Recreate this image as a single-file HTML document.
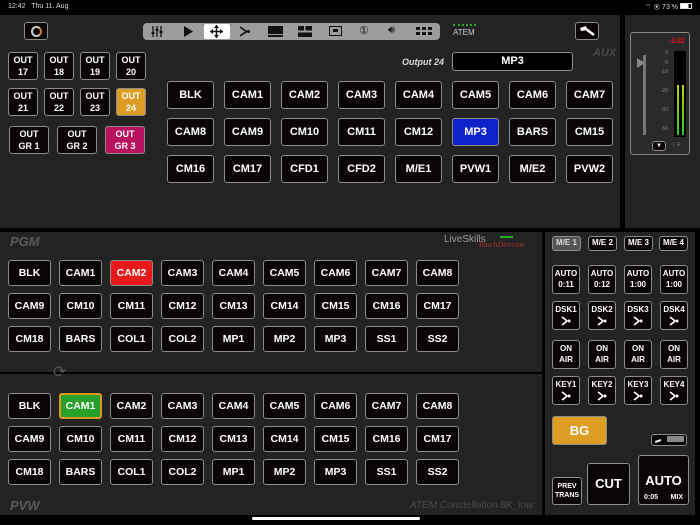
<!DOCTYPE html>
<html><head><meta charset="utf-8"><style>
*{margin:0;padding:0;box-sizing:border-box}
body{width:700px;height:525px;background:#000;position:relative;overflow:hidden;font-family:"Liberation Sans",sans-serif;color:#fff}
.p{position:absolute;background:#232323}
.b{position:absolute;background:#0b0606;border:1.5px solid #8c8c8c;border-radius:3px;color:#fff;font-weight:bold;font-size:11px;display:flex;flex-direction:column;align-items:center;justify-content:center;text-align:center;line-height:1.35}
.s{font-size:9px}
.g{position:absolute;color:#5a5a5a;font-style:italic;font-weight:bold;font-size:13px}
.r1 .b{height:28px;width:47px}
.pg .b{height:26px;width:43px;font-size:10.5px}
.k{font-size:8px}
.k svg{margin-top:1px}
</style></head><body>
<div style="position:absolute;left:8px;top:3px;font-size:7px;color:#ddd">12:42&nbsp;&nbsp; Thu 11. Aug</div>
<div style="position:absolute;left:645px;top:3px;font-size:7px;color:#ddd">⌔ ◉ 73 % <span style="display:inline-block;width:12px;height:6px;border:1px solid #ddd;background:linear-gradient(90deg,#fff 73%,transparent 73%)"></span></div>

<div class="p" style="left:0;top:15px;width:620px;height:213px"></div>
<div class="p" style="left:625px;top:15px;width:75px;height:213px"></div>
<div class="p" style="left:0;top:232px;width:542px;height:140px"></div>
<div class="p" style="left:0;top:374px;width:542px;height:141px"></div>
<div class="p" style="left:545px;top:232px;width:150px;height:283px"></div>

<div class="b" style="left:24px;top:22px;width:24px;height:18px;border-radius:3px"><div style="width:11px;height:11px;border-radius:50%;border:2px solid #ccc;border-right-color:#e07a20"></div></div>
<div style="position:absolute;left:143px;top:23px;width:297px;height:17px;background:#9c9c9c;border-radius:4px;color:#111;font-size:11px">
<div style="position:absolute;left:61px;top:1px;width:26px;height:15px;background:#fff;border-radius:2px"></div>
<svg style="position:absolute;left:8px;top:3px" width="12" height="11"><path d="M2 0V11M6 0V11M10 0V11" stroke="#111" stroke-width="1.3"/><rect x="0.5" y="6" width="3" height="2" fill="#111"/><rect x="4.5" y="3" width="3" height="2" fill="#111"/><rect x="8.5" y="5" width="3" height="2" fill="#111"/></svg>
<svg style="position:absolute;left:40px;top:3px" width="11" height="11"><path d="M1 0L10 5.5L1 11Z" fill="#111"/></svg>
<svg style="position:absolute;left:67px;top:2px" width="13" height="13"><path d="M6.5 0V13M0 6.5H13" stroke="#111" stroke-width="1.5"/><path d="M6.5 0L4 3H9ZM6.5 13L4 10H9ZM0 6.5L3 4V9ZM13 6.5L10 4V9Z" fill="#111"/></svg>
<svg style="position:absolute;left:96px;top:3px" width="12" height="11"><path d="M1 1Q5 4 8 5.5M1 10Q5 7 8 5.5" stroke="#111" stroke-width="1.6" fill="none"/><circle cx="9.5" cy="5.5" r="1.5" fill="#111"/></svg>
<span style="position:absolute;left:125px;top:3px;width:15px;height:8px;background:#111;display:block"></span>
<span style="position:absolute;left:125px;top:12px;width:15px;height:1.5px;background:#111;display:block"></span>
<svg style="position:absolute;left:155px;top:3px" width="14" height="11"><rect x="0" y="0" width="6" height="4.5" fill="#111"/><rect x="7.5" y="0" width="6.5" height="4.5" fill="#111"/><rect x="0" y="6.5" width="14" height="4.5" fill="#111"/></svg>
<span style="position:absolute;left:186px;top:3px;width:13px;height:10px;border:1.5px solid #111;display:block"><span style="display:block;margin:2px auto;width:5px;height:3px;background:#111"></span></span>
<span style="position:absolute;left:216px;top:1px">①</span>
<span style="position:absolute;left:245px;top:1px">🔊︎</span>
<svg style="position:absolute;left:273px;top:4px" width="16" height="8"><g fill="#111"><rect x="0" y="0" width="4" height="3"/><rect x="6" y="0" width="4" height="3"/><rect x="12" y="0" width="4" height="3"/><rect x="0" y="5" width="4" height="3"/><rect x="6" y="5" width="4" height="3"/><rect x="12" y="5" width="4" height="3"/></g></svg>
</div>
<div style="position:absolute;left:453px;top:24px;width:23px;border-top:2px dotted #2a2;"></div>
<div style="position:absolute;left:453px;top:28px;font-size:8px;color:#ccc">ATEM</div>
<div class="b" style="left:575px;top:22px;width:24px;height:18px"><svg width="16" height="12"><path d="M1 3L7 1L8 5L2 6Z" fill="#fff"/><path d="M7 4L15 10" stroke="#fff" stroke-width="2.5"/></svg></div>

<div class="b s" style="left:8px;top:52px;width:30px;height:28px">OUT<br>17</div>
<div class="b s" style="left:44px;top:52px;width:30px;height:28px">OUT<br>18</div>
<div class="b s" style="left:80px;top:52px;width:30px;height:28px">OUT<br>19</div>
<div class="b s" style="left:116px;top:52px;width:30px;height:28px">OUT<br>20</div>
<div class="b s" style="left:8px;top:88px;width:30px;height:28px">OUT<br>21</div>
<div class="b s" style="left:44px;top:88px;width:30px;height:28px">OUT<br>22</div>
<div class="b s" style="left:80px;top:88px;width:30px;height:28px">OUT<br>23</div>
<div class="b s" style="left:116px;top:88px;width:30px;height:28px;background:#dc9d22">OUT<br>24</div>
<div class="b s" style="left:9px;top:126px;width:40px;height:28px">OUT<br>GR 1</div>
<div class="b s" style="left:57px;top:126px;width:40px;height:28px">OUT<br>GR 2</div>
<div class="b s" style="left:105px;top:126px;width:40px;height:28px;background:#b8125e">OUT<br>GR 3</div>

<div style="position:absolute;left:402px;top:57px;font-size:9px;font-style:italic;font-weight:bold;color:#ddd">Output 24</div>
<div class="b" style="left:452px;top:52px;width:121px;height:19px;background:#000">MP3</div>
<div class="g" style="left:593px;top:47px;font-size:11px;color:#4a4a4a">AUX</div>

<div class="r1">
<div class="b" style="left:167px;top:81px">BLK</div><div class="b" style="left:224px;top:81px">CAM1</div><div class="b" style="left:281px;top:81px">CAM2</div><div class="b" style="left:338px;top:81px">CAM3</div><div class="b" style="left:395px;top:81px">CAM4</div><div class="b" style="left:452px;top:81px">CAM5</div><div class="b" style="left:509px;top:81px">CAM6</div><div class="b" style="left:566px;top:81px">CAM7</div>
<div class="b" style="left:167px;top:118px">CAM8</div><div class="b" style="left:224px;top:118px">CAM9</div><div class="b" style="left:281px;top:118px">CM10</div><div class="b" style="left:338px;top:118px">CM11</div><div class="b" style="left:395px;top:118px">CM12</div><div class="b" style="left:452px;top:118px;background:#0f22c8">MP3</div><div class="b" style="left:509px;top:118px">BARS</div><div class="b" style="left:566px;top:118px">CM15</div>
<div class="b" style="left:167px;top:155px">CM16</div><div class="b" style="left:224px;top:155px">CM17</div><div class="b" style="left:281px;top:155px">CFD1</div><div class="b" style="left:338px;top:155px">CFD2</div><div class="b" style="left:395px;top:155px">M/E1</div><div class="b" style="left:452px;top:155px">PVW1</div><div class="b" style="left:509px;top:155px">M/E2</div><div class="b" style="left:566px;top:155px">PVW2</div>
</div>

<div style="position:absolute;left:630px;top:32px;width:60px;height:123px;border:1.5px solid #888;border-radius:3px;background:#2a2a2a"></div>
<div style="position:absolute;left:669px;top:38px;font-size:7px;color:#e01010;font-weight:bold">-3.82</div>
<div style="position:absolute;left:674px;top:51px;width:12px;height:86px;background:#000"></div>
<div style="position:absolute;left:677px;top:85px;width:2px;height:50px;background:linear-gradient(#cc0,#2c2)"></div>
<div style="position:absolute;left:682px;top:85px;width:2px;height:50px;background:linear-gradient(#cc0,#2c2)"></div>
<div style="position:absolute;left:643px;top:55px;width:3px;height:80px;background:#777"></div>
<div style="position:absolute;left:637px;top:58px;width:0;height:0;border-top:5px solid transparent;border-bottom:5px solid transparent;border-left:8px solid #888"></div>
<div style="position:absolute;left:656px;top:49px;font-size:5px;color:#888;line-height:9.5px;text-align:right;width:12px">0<br>-5<br>-10<br><br>-20<br><br>-30<br><br>-50</div>
<div class="b" style="left:652px;top:141px;width:14px;height:10px;font-size:6px">▼</div>
<div style="position:absolute;left:673px;top:142px;font-size:5px;color:#777">L R</div>

<div class="g" style="left:10px;top:234px">PGM</div>
<div style="position:absolute;left:444px;top:234px;font-size:10px;color:#999">LiveSkills</div>
<div style="position:absolute;left:478px;top:240px;font-size:8px;color:#b03030;font-style:italic;font-family:'Liberation Serif',serif">TouchDirector</div>
<div style="position:absolute;left:500px;top:236px;width:13px;height:2px;background:#2a2"></div>
<div style="position:absolute;left:53px;top:362px;font-size:16px;color:#555">⟳</div>
<div class="g" style="left:10px;top:498px">PVW</div>
<div style="position:absolute;left:410px;top:500px;font-size:10px;color:#4a4a4a;font-style:italic">ATEM Constellation 8K_low</div>

<div class="pg">
<div class="b" style="left:8px;top:260px">BLK</div><div class="b" style="left:59px;top:260px">CAM1</div><div class="b" style="left:110px;top:260px;background:#e8191a">CAM2</div><div class="b" style="left:161px;top:260px">CAM3</div><div class="b" style="left:212px;top:260px">CAM4</div><div class="b" style="left:263px;top:260px">CAM5</div><div class="b" style="left:314px;top:260px">CAM6</div><div class="b" style="left:365px;top:260px">CAM7</div><div class="b" style="left:416px;top:260px">CAM8</div>
<div class="b" style="left:8px;top:293px">CAM9</div><div class="b" style="left:59px;top:293px">CM10</div><div class="b" style="left:110px;top:293px">CM11</div><div class="b" style="left:161px;top:293px">CM12</div><div class="b" style="left:212px;top:293px">CM13</div><div class="b" style="left:263px;top:293px">CM14</div><div class="b" style="left:314px;top:293px">CM15</div><div class="b" style="left:365px;top:293px">CM16</div><div class="b" style="left:416px;top:293px">CM17</div>
<div class="b" style="left:8px;top:326px">CM18</div><div class="b" style="left:59px;top:326px">BARS</div><div class="b" style="left:110px;top:326px">COL1</div><div class="b" style="left:161px;top:326px">COL2</div><div class="b" style="left:212px;top:326px">MP1</div><div class="b" style="left:263px;top:326px">MP2</div><div class="b" style="left:314px;top:326px">MP3</div><div class="b" style="left:365px;top:326px">SS1</div><div class="b" style="left:416px;top:326px">SS2</div>

<div class="b" style="left:8px;top:393px">BLK</div><div class="b" style="left:59px;top:393px;background:#27a02c;border:2.5px solid #d99a20">CAM1</div><div class="b" style="left:110px;top:393px">CAM2</div><div class="b" style="left:161px;top:393px">CAM3</div><div class="b" style="left:212px;top:393px">CAM4</div><div class="b" style="left:263px;top:393px">CAM5</div><div class="b" style="left:314px;top:393px">CAM6</div><div class="b" style="left:365px;top:393px">CAM7</div><div class="b" style="left:416px;top:393px">CAM8</div>
<div class="b" style="left:8px;top:426px">CAM9</div><div class="b" style="left:59px;top:426px">CM10</div><div class="b" style="left:110px;top:426px">CM11</div><div class="b" style="left:161px;top:426px">CM12</div><div class="b" style="left:212px;top:426px">CM13</div><div class="b" style="left:263px;top:426px">CM14</div><div class="b" style="left:314px;top:426px">CM15</div><div class="b" style="left:365px;top:426px">CM16</div><div class="b" style="left:416px;top:426px">CM17</div>
<div class="b" style="left:8px;top:459px">CM18</div><div class="b" style="left:59px;top:459px">BARS</div><div class="b" style="left:110px;top:459px">COL1</div><div class="b" style="left:161px;top:459px">COL2</div><div class="b" style="left:212px;top:459px">MP1</div><div class="b" style="left:263px;top:459px">MP2</div><div class="b" style="left:314px;top:459px">MP3</div><div class="b" style="left:365px;top:459px">SS1</div><div class="b" style="left:416px;top:459px">SS2</div>
</div>

<div class="b" style="left:552px;top:236px;width:29px;height:15px;font-size:8px;background:#555;color:#ddd">M/E 1</div>
<div class="b" style="left:588px;top:236px;width:29px;height:15px;font-size:8px">M/E 2</div>
<div class="b" style="left:624px;top:236px;width:29px;height:15px;font-size:8px">M/E 3</div>
<div class="b" style="left:659px;top:236px;width:29px;height:15px;font-size:8px">M/E 4</div>

<div class="b k" style="left:552px;top:265px;width:28px;height:29px">AUTO<br>0:11</div>
<div class="b k" style="left:588px;top:265px;width:28px;height:29px">AUTO<br>0:12</div>
<div class="b k" style="left:624px;top:265px;width:28px;height:29px">AUTO<br>1:00</div>
<div class="b k" style="left:660px;top:265px;width:28px;height:29px">AUTO<br>1:00</div>

<div class="b k" style="left:552px;top:301px;width:28px;height:29px">DSK1<svg width="10" height="10"><path d="M1 1Q5 4 6 5M1 9Q5 6 6 5" stroke="#fff" stroke-width="1.6" fill="none"/><circle cx="8" cy="5" r="1.5" fill="#fff"/></svg></div>
<div class="b k" style="left:588px;top:301px;width:28px;height:29px">DSK2<svg width="10" height="10"><path d="M1 1Q5 4 6 5M1 9Q5 6 6 5" stroke="#fff" stroke-width="1.6" fill="none"/><circle cx="8" cy="5" r="1.5" fill="#fff"/></svg></div>
<div class="b k" style="left:624px;top:301px;width:28px;height:29px">DSK3<svg width="10" height="10"><path d="M1 1Q5 4 6 5M1 9Q5 6 6 5" stroke="#fff" stroke-width="1.6" fill="none"/><circle cx="8" cy="5" r="1.5" fill="#fff"/></svg></div>
<div class="b k" style="left:660px;top:301px;width:28px;height:29px">DSK4<svg width="10" height="10"><path d="M1 1Q5 4 6 5M1 9Q5 6 6 5" stroke="#fff" stroke-width="1.6" fill="none"/><circle cx="8" cy="5" r="1.5" fill="#fff"/></svg></div>

<div class="b k" style="left:552px;top:340px;width:28px;height:29px">ON<br>AIR</div>
<div class="b k" style="left:588px;top:340px;width:28px;height:29px">ON<br>AIR</div>
<div class="b k" style="left:624px;top:340px;width:28px;height:29px">ON<br>AIR</div>
<div class="b k" style="left:660px;top:340px;width:28px;height:29px">ON<br>AIR</div>

<div class="b k" style="left:552px;top:376px;width:28px;height:29px">KEY1<svg width="10" height="10"><path d="M1 1Q5 4 6 5M1 9Q5 6 6 5" stroke="#fff" stroke-width="1.6" fill="none"/><circle cx="8" cy="5" r="1.5" fill="#fff"/></svg></div>
<div class="b k" style="left:588px;top:376px;width:28px;height:29px">KEY2<svg width="10" height="10"><path d="M1 1Q5 4 6 5M1 9Q5 6 6 5" stroke="#fff" stroke-width="1.6" fill="none"/><circle cx="8" cy="5" r="1.5" fill="#fff"/></svg></div>
<div class="b k" style="left:624px;top:376px;width:28px;height:29px">KEY3<svg width="10" height="10"><path d="M1 1Q5 4 6 5M1 9Q5 6 6 5" stroke="#fff" stroke-width="1.6" fill="none"/><circle cx="8" cy="5" r="1.5" fill="#fff"/></svg></div>
<div class="b k" style="left:660px;top:376px;width:28px;height:29px">KEY4<svg width="10" height="10"><path d="M1 1Q5 4 6 5M1 9Q5 6 6 5" stroke="#fff" stroke-width="1.6" fill="none"/><circle cx="8" cy="5" r="1.5" fill="#fff"/></svg></div>

<div class="b" style="left:552px;top:416px;width:55px;height:29px;background:#dc9d22;font-size:13px">BG</div>
<div class="b" style="left:651px;top:434px;width:36px;height:12px;border-width:1px"><div style="position:absolute;right:2px;top:1px;width:17px;height:6px;background:#888"></div><div style="position:absolute;left:3px;top:5px;width:6px;height:1.5px;background:#fff;transform:rotate(-20deg)"></div></div>
<div class="b" style="left:552px;top:477px;width:30px;height:28px;font-size:7px">PREV<br>TRANS</div>
<div class="b" style="left:587px;top:463px;width:43px;height:42px;font-size:13px">CUT</div>
<div class="b" style="left:638px;top:455px;width:51px;height:50px;font-size:13px;display:block;padding-top:16px">AUTO<div style="font-size:7px;display:flex;justify-content:space-between;padding:3px 5px 0">
<span>0:05</span><span>MIX</span></div></div>

<div style="position:absolute;left:252px;top:517px;width:168px;height:3px;border-radius:2px;background:#fff"></div>
</body></html>
